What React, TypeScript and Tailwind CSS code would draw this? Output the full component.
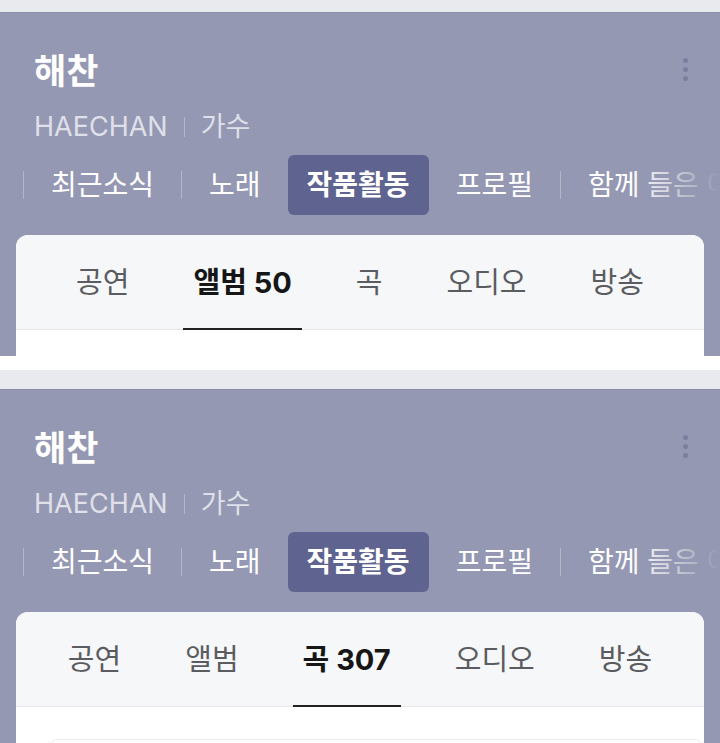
import React from 'react';

const TABS = [
  { label: '공연' },
  { label: '앨범', count: '50' },
  { label: '곡', count: '307' },
  { label: '오디오' },
  { label: '방송' },
];

function Sep() {
  return <div className="w-px h-[28px] bg-white/30 shrink-0" />;
}

function NavItem({ children }: { children: React.ReactNode }) {
  return <div className="px-[19px] text-[28px] leading-none text-white shrink-0">{children}</div>;
}

function ArtistScreen({ active, topBar, boxHeight, purpleHeight }: { active: number; topBar: string; boxHeight: string; purpleHeight: string }) {
  return (
    <div className={`relative overflow-hidden bg-white ${boxHeight}`}>
      <div className={`bg-[#e9eaee] border-b border-[#8a8da8] ${topBar}`} />
      <div className={`relative overflow-hidden bg-[#9598b2] ${purpleHeight}`}>
        {/* more menu */}
        <div className="absolute right-[32px] top-[45px] flex flex-col gap-[4px]">
          <span className="w-[5px] h-[5px] rounded-full bg-[#7b7e9e]" />
          <span className="w-[5px] h-[5px] rounded-full bg-[#7b7e9e]" />
          <span className="w-[5px] h-[5px] rounded-full bg-[#7b7e9e]" />
        </div>

        <div className="pl-[34px] pt-[41px]">
          <h1 className="text-[35px] leading-none font-bold text-white">해찬</h1>
          <div className="mt-[24px] flex items-center text-[27px] leading-none text-[#dfe0ea]">
            <span>HAECHAN</span>
            <span className="mx-[16px] w-px h-[20px] bg-white/30" />
            <span>가수</span>
          </div>
        </div>

        <div className="relative mt-[15px] flex items-center gap-[8px] pl-[23px] h-[60px] whitespace-nowrap overflow-hidden">
          <Sep />
          <NavItem>최근소식</NavItem>
          <Sep />
          <NavItem>노래</NavItem>
          <div className="h-[60px] px-[19px] flex items-center rounded-[6px] bg-[#5f6390] text-white text-[28px] leading-none font-bold shrink-0">
            작품활동
          </div>
          <NavItem>프로필</NavItem>
          <Sep />
          <NavItem>함께 들은 아티스트</NavItem>
          <div className="absolute right-0 top-0 h-full w-[90px] bg-gradient-to-r from-[#9598b2]/0 to-[#9598b2]" />
        </div>

        <div className="mx-[16px] mt-[20px] rounded-t-[12px] bg-white overflow-hidden">
          <div className="h-[95px] bg-[#f6f7f9] border-b border-[#e6e7eb] flex justify-center gap-[44px]">
            {TABS.map((t, i) => {
              const on = i === active;
              return (
                <div key={t.label} className="relative px-[10px] flex items-center">
                  <span className={`text-[29px] leading-none ${on ? 'font-bold text-[#161616]' : 'text-[#5b5c60]'}`}>
                    {t.label}
                    {on && t.count ? ` ${t.count}` : ''}
                  </span>
                  {on && <span className="absolute left-0 right-0 bottom-[-1px] h-[2px] bg-[#222]" />}
                </div>
              );
            })}
          </div>
          <div className="h-[200px] bg-white pt-[32px] pl-[32px]">
            <div className="h-[80px] rounded-[10px] border border-[#ececef]" />
          </div>
        </div>
      </div>
    </div>
  );
}

export default function App() {
  return (
    <div className="w-[720px] h-[743px] overflow-hidden bg-white font-['Inter','Noto_Sans_CJK_KR',sans-serif]">
      <ArtistScreen active={1} topBar="h-[13px]" boxHeight="h-[370px]" purpleHeight="h-[343px]" />
      <ArtistScreen active={2} topBar="h-[20px]" boxHeight="h-[373px]" purpleHeight="h-[400px]" />
    </div>
  );
}
